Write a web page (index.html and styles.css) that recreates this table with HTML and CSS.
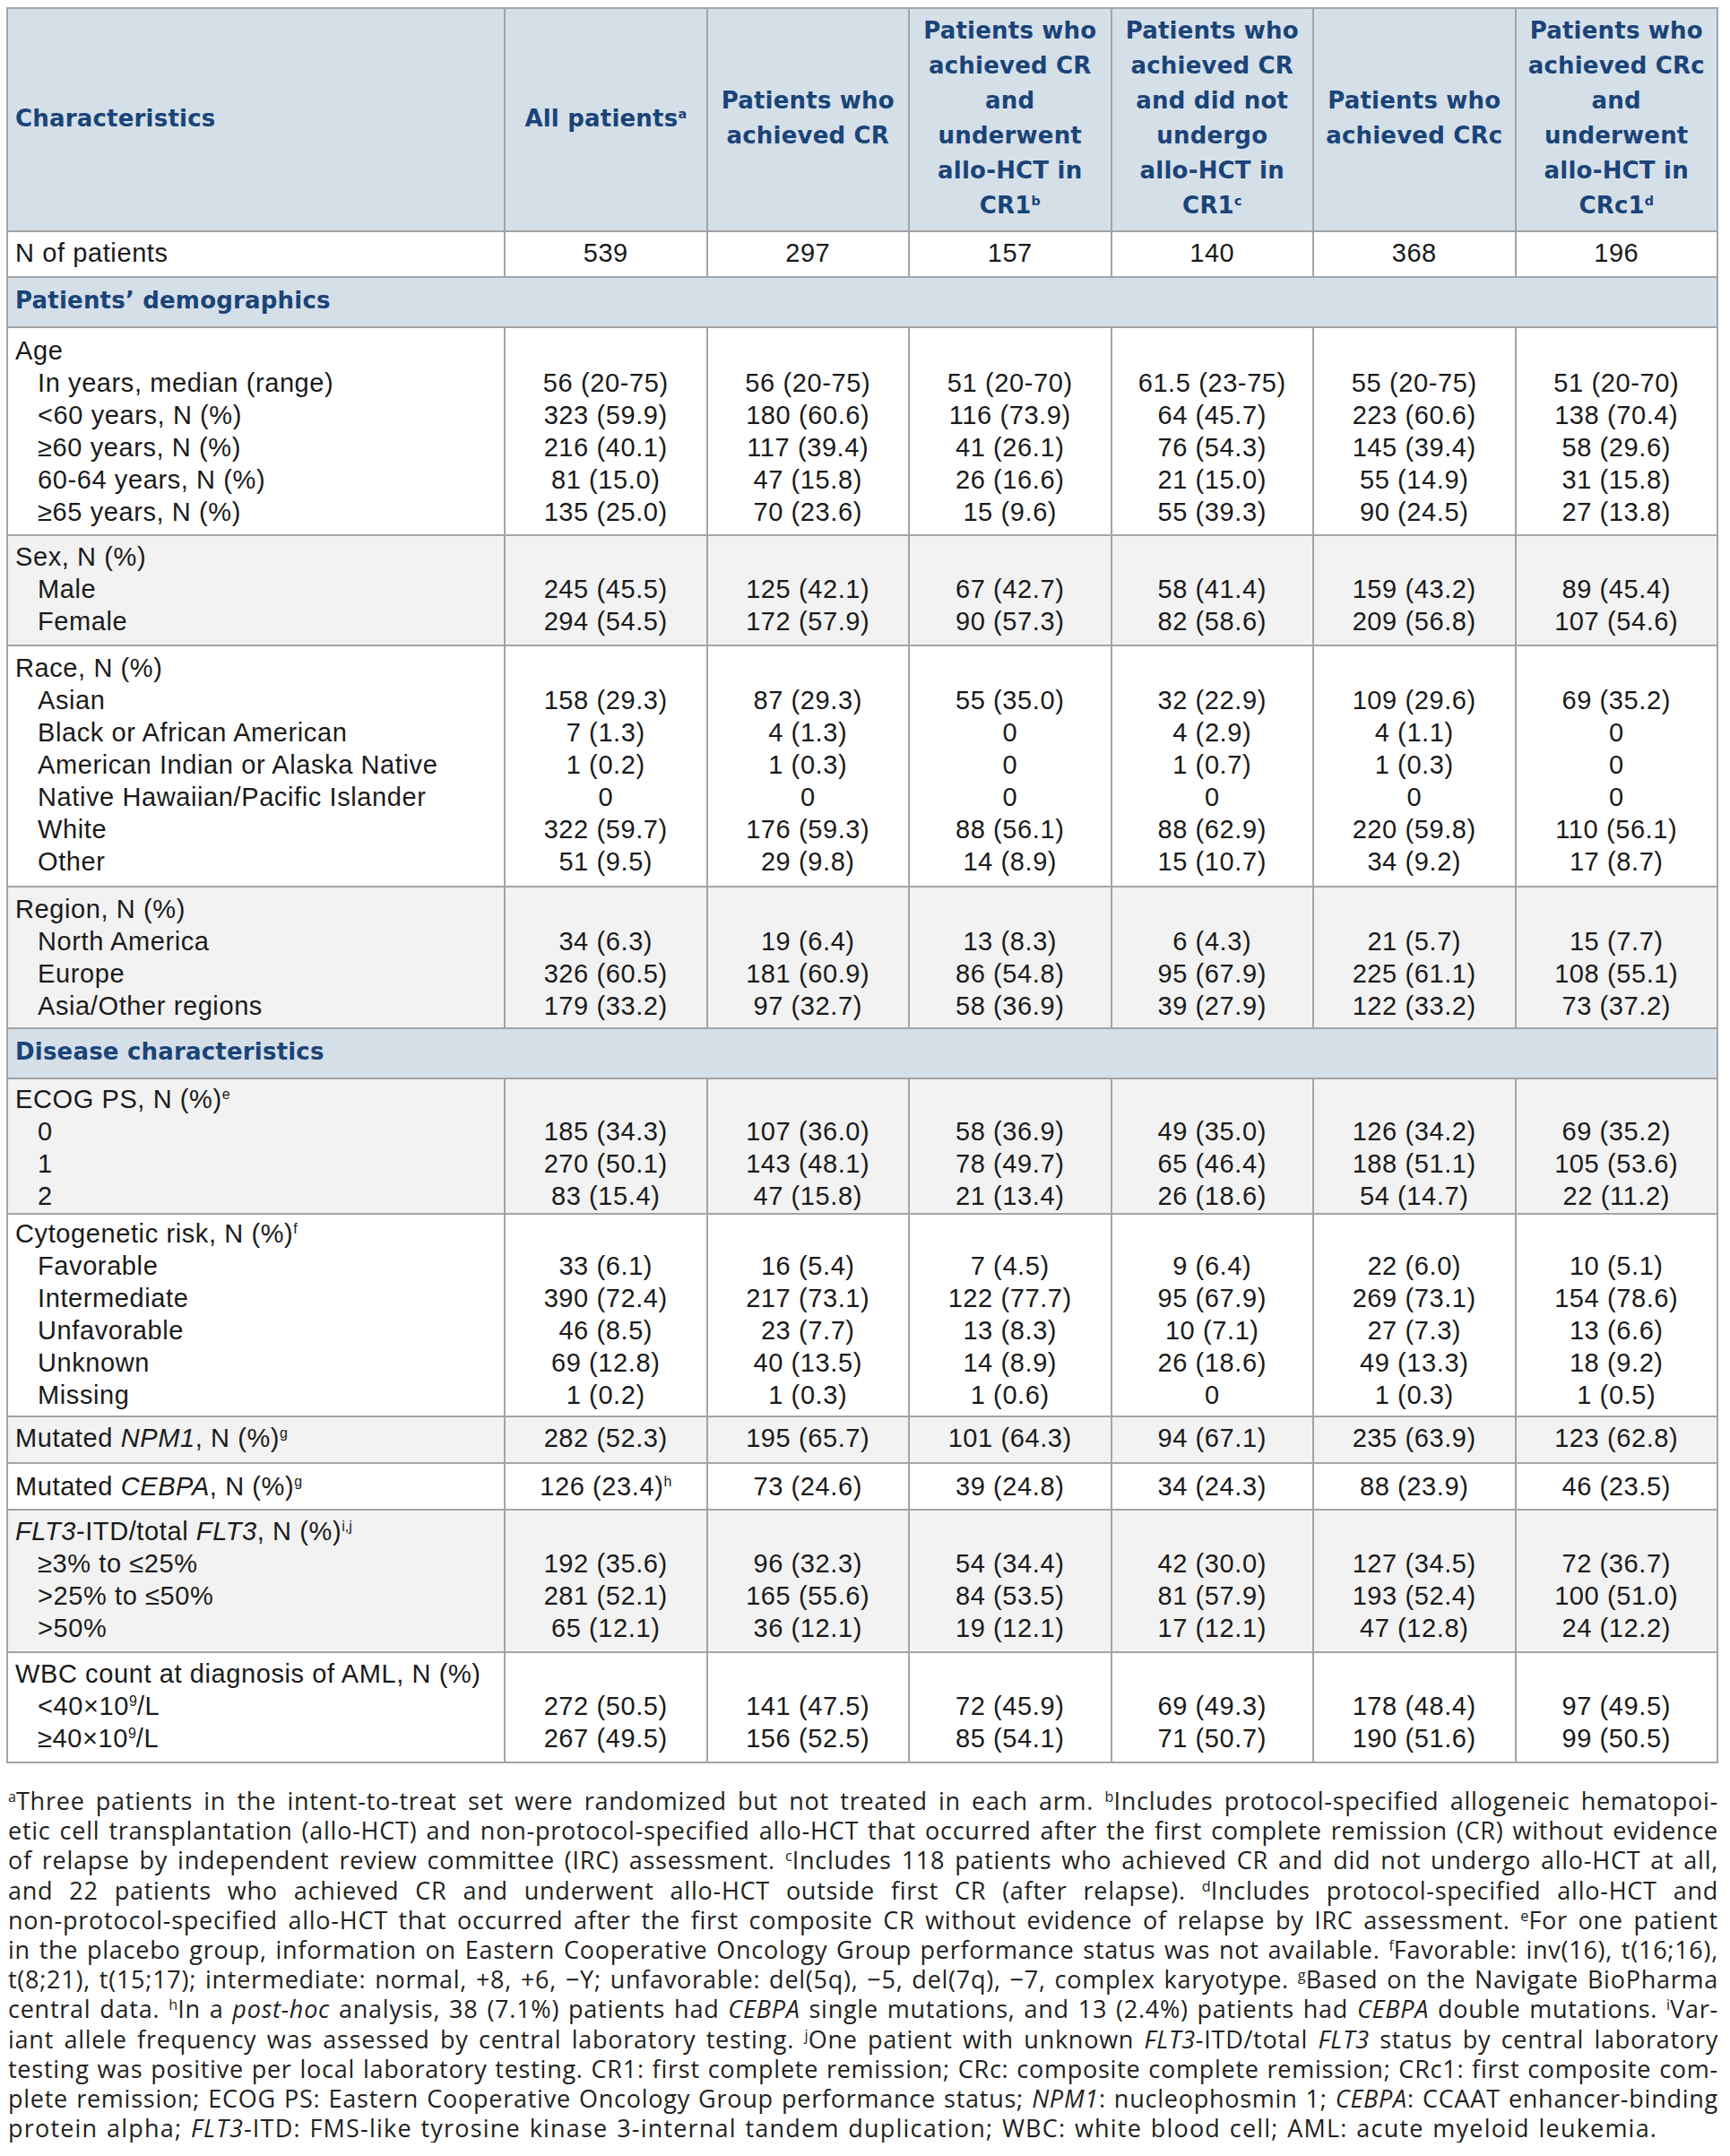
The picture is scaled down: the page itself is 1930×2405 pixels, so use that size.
FILE: index.html
```html
<!DOCTYPE html>
<html lang="en">
<head>
<meta charset="utf-8">
<title>Patient characteristics</title>
<link rel="stylesheet" href="styles.css">
</head>
<body>
<div class="page">
<table class="chars">
<colgroup><col class="c-label"><col><col><col><col><col><col></colgroup>
<thead>
<tr>
<th class="th-label">Characteristics</th>
<th>All patients<sup>a</sup></th>
<th>Patients who<br>achieved CR</th>
<th>Patients who<br>achieved CR<br>and<br>underwent<br>allo-HCT in<br>CR1<sup>b</sup></th>
<th>Patients who<br>achieved CR<br>and did not<br>undergo<br>allo-HCT in<br>CR1<sup>c</sup></th>
<th>Patients who<br>achieved CRc</th>
<th>Patients who<br>achieved CRc<br>and<br>underwent<br>allo-HCT in<br>CRc1<sup>d</sup></th>
</tr>
</thead>
<tbody>
<tr>
<td class="lbl">N of patients</td>
<td>539</td><td>297</td><td>157</td><td>140</td><td>368</td><td>196</td>
</tr>
<tr class="section"><td colspan="7">Patients’ demographics</td></tr>
<tr class="r-age">
<td class="lbl">Age<span class="sub">In years, median (range)</span><span class="sub">&lt;60 years, N (%)</span><span class="sub">≥60 years, N (%)</span><span class="sub">60-64 years, N (%)</span><span class="sub">≥65 years, N (%)</span></td>
<td><br>56 (20-75)<br>323 (59.9)<br>216 (40.1)<br>81 (15.0)<br>135 (25.0)</td>
<td><br>56 (20-75)<br>180 (60.6)<br>117 (39.4)<br>47 (15.8)<br>70 (23.6)</td>
<td><br>51 (20-70)<br>116 (73.9)<br>41 (26.1)<br>26 (16.6)<br>15 (9.6)</td>
<td><br>61.5 (23-75)<br>64 (45.7)<br>76 (54.3)<br>21 (15.0)<br>55 (39.3)</td>
<td><br>55 (20-75)<br>223 (60.6)<br>145 (39.4)<br>55 (14.9)<br>90 (24.5)</td>
<td><br>51 (20-70)<br>138 (70.4)<br>58 (29.6)<br>31 (15.8)<br>27 (13.8)</td>
</tr>
<tr class="gray">
<td class="lbl">Sex, N (%)<span class="sub">Male</span><span class="sub">Female</span></td>
<td><br>245 (45.5)<br>294 (54.5)</td>
<td><br>125 (42.1)<br>172 (57.9)</td>
<td><br>67 (42.7)<br>90 (57.3)</td>
<td><br>58 (41.4)<br>82 (58.6)</td>
<td><br>159 (43.2)<br>209 (56.8)</td>
<td><br>89 (45.4)<br>107 (54.6)</td>
</tr>
<tr class="r-race">
<td class="lbl">Race, N (%)<span class="sub">Asian</span><span class="sub">Black or African American</span><span class="sub">American Indian or Alaska Native</span><span class="sub">Native Hawaiian/Pacific Islander</span><span class="sub">White</span><span class="sub">Other</span></td>
<td><br>158 (29.3)<br>7 (1.3)<br>1 (0.2)<br>0<br>322 (59.7)<br>51 (9.5)</td>
<td><br>87 (29.3)<br>4 (1.3)<br>1 (0.3)<br>0<br>176 (59.3)<br>29 (9.8)</td>
<td><br>55 (35.0)<br>0<br>0<br>0<br>88 (56.1)<br>14 (8.9)</td>
<td><br>32 (22.9)<br>4 (2.9)<br>1 (0.7)<br>0<br>88 (62.9)<br>15 (10.7)</td>
<td><br>109 (29.6)<br>4 (1.1)<br>1 (0.3)<br>0<br>220 (59.8)<br>34 (9.2)</td>
<td><br>69 (35.2)<br>0<br>0<br>0<br>110 (56.1)<br>17 (8.7)</td>
</tr>
<tr class="gray r-region">
<td class="lbl">Region, N (%)<span class="sub">North America</span><span class="sub">Europe</span><span class="sub">Asia/Other regions</span></td>
<td><br>34 (6.3)<br>326 (60.5)<br>179 (33.2)</td>
<td><br>19 (6.4)<br>181 (60.9)<br>97 (32.7)</td>
<td><br>13 (8.3)<br>86 (54.8)<br>58 (36.9)</td>
<td><br>6 (4.3)<br>95 (67.9)<br>39 (27.9)</td>
<td><br>21 (5.7)<br>225 (61.1)<br>122 (33.2)</td>
<td><br>15 (7.7)<br>108 (55.1)<br>73 (37.2)</td>
</tr>
<tr class="section"><td colspan="7">Disease characteristics</td></tr>
<tr class="gray r-ecog">
<td class="lbl">ECOG PS, N (%)<sup>e</sup><span class="sub">0</span><span class="sub">1</span><span class="sub">2</span></td>
<td><br>185 (34.3)<br>270 (50.1)<br>83 (15.4)</td>
<td><br>107 (36.0)<br>143 (48.1)<br>47 (15.8)</td>
<td><br>58 (36.9)<br>78 (49.7)<br>21 (13.4)</td>
<td><br>49 (35.0)<br>65 (46.4)<br>26 (18.6)</td>
<td><br>126 (34.2)<br>188 (51.1)<br>54 (14.7)</td>
<td><br>69 (35.2)<br>105 (53.6)<br>22 (11.2)</td>
</tr>
<tr class="r-cyto">
<td class="lbl">Cytogenetic risk, N (%)<sup>f</sup><span class="sub">Favorable</span><span class="sub">Intermediate</span><span class="sub">Unfavorable</span><span class="sub">Unknown</span><span class="sub">Missing</span></td>
<td><br>33 (6.1)<br>390 (72.4)<br>46 (8.5)<br>69 (12.8)<br>1 (0.2)</td>
<td><br>16 (5.4)<br>217 (73.1)<br>23 (7.7)<br>40 (13.5)<br>1 (0.3)</td>
<td><br>7 (4.5)<br>122 (77.7)<br>13 (8.3)<br>14 (8.9)<br>1 (0.6)</td>
<td><br>9 (6.4)<br>95 (67.9)<br>10 (7.1)<br>26 (18.6)<br>0</td>
<td><br>22 (6.0)<br>269 (73.1)<br>27 (7.3)<br>49 (13.3)<br>1 (0.3)</td>
<td><br>10 (5.1)<br>154 (78.6)<br>13 (6.6)<br>18 (9.2)<br>1 (0.5)</td>
</tr>
<tr class="gray r-npm">
<td class="lbl">Mutated <i>NPM1</i>, N (%)<sup>g</sup></td>
<td>282 (52.3)</td><td>195 (65.7)</td><td>101 (64.3)</td><td>94 (67.1)</td><td>235 (63.9)</td><td>123 (62.8)</td>
</tr>
<tr class="r-cebpa">
<td class="lbl">Mutated <i>CEBPA</i>, N (%)<sup>g</sup></td>
<td>126 (23.4)<sup>h</sup></td><td>73 (24.6)</td><td>39 (24.8)</td><td>34 (24.3)</td><td>88 (23.9)</td><td>46 (23.5)</td>
</tr>
<tr class="gray">
<td class="lbl"><i>FLT3</i>-ITD/total <i>FLT3</i>, N (%)<sup>i,j</sup><span class="sub">≥3% to ≤25%</span><span class="sub">&gt;25% to ≤50%</span><span class="sub">&gt;50%</span></td>
<td><br>192 (35.6)<br>281 (52.1)<br>65 (12.1)</td>
<td><br>96 (32.3)<br>165 (55.6)<br>36 (12.1)</td>
<td><br>54 (34.4)<br>84 (53.5)<br>19 (12.1)</td>
<td><br>42 (30.0)<br>81 (57.9)<br>17 (12.1)</td>
<td><br>127 (34.5)<br>193 (52.4)<br>47 (12.8)</td>
<td><br>72 (36.7)<br>100 (51.0)<br>24 (12.2)</td>
</tr>
<tr>
<td class="lbl">WBC count at diagnosis of AML, N (%)<span class="sub">&lt;40×10<sup>9</sup>/L</span><span class="sub">≥40×10<sup>9</sup>/L</span></td>
<td><br>272 (50.5)<br>267 (49.5)</td>
<td><br>141 (47.5)<br>156 (52.5)</td>
<td><br>72 (45.9)<br>85 (54.1)</td>
<td><br>69 (49.3)<br>71 (50.7)</td>
<td><br>178 (48.4)<br>190 (51.6)</td>
<td><br>97 (49.5)<br>99 (50.5)</td>
</tr>
</tbody>
</table>

<p class="notes">
<span class="ln"><sup>a</sup>Three patients in the intent-to-treat set were randomized but not treated in each arm. <sup>b</sup>Includes protocol-specified allogeneic hematopoi-</span>
<span class="ln">etic cell transplantation (allo-HCT) and non-protocol-specified allo-HCT that occurred after the first complete remission (CR) without evidence</span>
<span class="ln">of relapse by independent review committee (IRC) assessment. <sup>c</sup>Includes 118 patients who achieved CR and did not undergo allo-HCT at all,</span>
<span class="ln">and 22 patients who achieved CR and underwent allo-HCT outside first CR (after relapse). <sup>d</sup>Includes protocol-specified allo-HCT and</span>
<span class="ln">non-protocol-specified allo-HCT that occurred after the first composite CR without evidence of relapse by IRC assessment. <sup>e</sup>For one patient</span>
<span class="ln">in the placebo group, information on Eastern Cooperative Oncology Group performance status was not available. <sup>f</sup>Favorable: inv(16), t(16;16),</span>
<span class="ln">t(8;21), t(15;17); intermediate: normal, +8, +6, −Y; unfavorable: del(5q), −5, del(7q), −7, complex karyotype. <sup>g</sup>Based on the Navigate BioPharma</span>
<span class="ln">central data. <sup>h</sup>In a <i>post-hoc</i> analysis, 38 (7.1%) patients had <i>CEBPA</i> single mutations, and 13 (2.4%) patients had <i>CEBPA</i> double mutations. <sup>i</sup>Var-</span>
<span class="ln">iant allele frequency was assessed by central laboratory testing. <sup>j</sup>One patient with unknown <i>FLT3</i>-ITD/total <i>FLT3</i> status by central laboratory</span>
<span class="ln">testing was positive per local laboratory testing. CR1: first complete remission; CRc: composite complete remission; CRc1: first composite com-</span>
<span class="ln">plete remission; ECOG PS: Eastern Cooperative Oncology Group performance status; <i>NPM1</i>: nucleophosmin 1; <i>CEBPA</i>: CCAAT enhancer-binding</span>
<span class="ln last">protein alpha; <i>FLT3</i>-ITD: FMS-like tyrosine kinase 3-internal tandem duplication; WBC: white blood cell; AML: acute myeloid leukemia.</span>
</p>
</div>
</body>
</html>
```

FILE: styles.css
```css
html, body {
  margin: 0;
  padding: 0;
  background: #ffffff;
}

body {
  font-family: "Liberation Sans", Arial, sans-serif;
  color: #1a1a1a;
}

.page {
  padding: 8px 13px 0 7px;
}

.chars {
  border-collapse: collapse;
  table-layout: fixed;
  width: 1910px;
  font-size: 29px;
  letter-spacing: 0.6px;
  line-height: 36px;
}

.chars col.c-label {
  width: 555px;
}

.chars th,
.chars td {
  border: 2px solid #a4a4a4;
}

.chars sup {
  font-size: 0.55em;
  line-height: 0;
  vertical-align: 0.6em;
  letter-spacing: 0;
}

.chars thead th {
  background: #d5dfe8;
  color: #1a4478;
  font-family: "DejaVu Sans", sans-serif;
  font-weight: bold;
  font-size: 26px;
  line-height: 39px;
  letter-spacing: 0.2px;
  padding: 5px 6px 8px;
  text-align: center;
  vertical-align: middle;
}

.chars thead th.th-label {
  text-align: left;
  padding-left: 8px;
}

.chars td {
  padding: 5px 8px 8px;
  text-align: center;
  vertical-align: top;
  background: #ffffff;
}

.chars td.lbl {
  text-align: left;
}

.chars .sub {
  display: block;
  padding-left: 25px;
}

.chars tr.gray td {
  background: #f2f2f2;
}

.chars tr.section td {
  background: #d5dfe8;
  color: #1a4478;
  font-family: "DejaVu Sans", sans-serif;
  font-weight: bold;
  font-size: 26px;
  line-height: 39px;
  letter-spacing: 0.2px;
  padding: 6px 8px 9px;
  text-align: left;
}

/* per-group spacing taken from the printed table */
.chars tr.r-age td {
  padding-top: 7px;
  padding-bottom: 7px;
}

.chars tr.r-race td {
  padding-top: 6px;
  padding-bottom: 9px;
}

.chars tr.r-region td {
  padding-top: 6px;
  padding-bottom: 6px;
}

.chars tr.r-ecog td {
  padding-top: 4px;
  padding-bottom: 1px;
}

.chars tr.r-cyto td {
  padding-top: 3px;
  padding-bottom: 5px;
}

.chars tr.r-npm td {
  padding-top: 5px;
  padding-bottom: 9px;
}

.chars tr.r-cebpa td {
  padding-top: 7px;
  padding-bottom: 7px;
}

.notes {
  margin: 25px 0 0 2px;
  width: 1908px;
  font-family: "Open Sans", sans-serif;
  font-size: 27px;
  letter-spacing: 0.75px;
  line-height: 33.2px;
  color: #231f20;
}

.notes .ln {
  display: block;
  white-space: nowrap;
  text-align: justify;
  text-align-last: justify;
}

.notes .ln.last {
  text-align-last: left;
  letter-spacing: 1.2px;
  word-spacing: 1.5px;
}

.notes sup {
  font-size: 0.6em;
  line-height: 0;
  vertical-align: 0.55em;
  letter-spacing: 0;
}
```
